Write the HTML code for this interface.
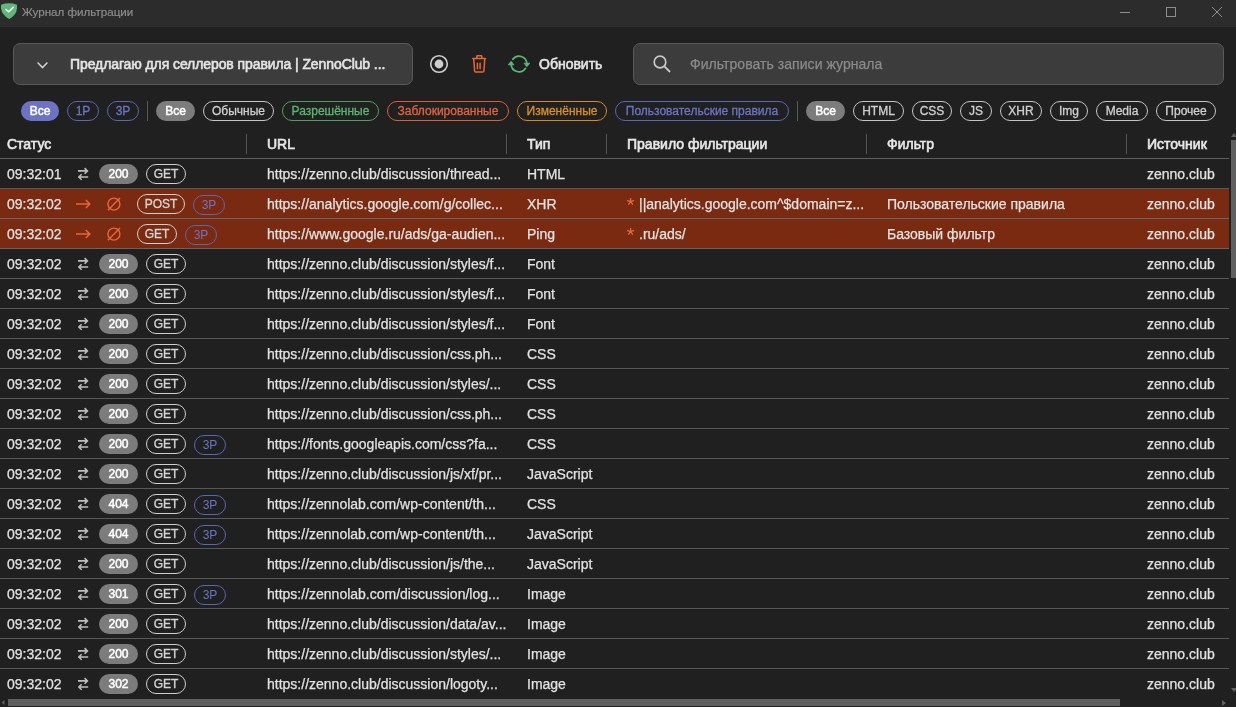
<!DOCTYPE html>
<html><head><meta charset="utf-8">
<style>
*{margin:0;padding:0;box-sizing:border-box}
html,body{width:1236px;height:707px;overflow:hidden;background:#202020;-webkit-font-smoothing:antialiased;font-family:"Liberation Sans",sans-serif;color:#e6e6e6;position:relative}
.abs{position:absolute}
#title{position:absolute;left:0;top:0;width:1236px;height:27px;background:#2c2c2c}
#title .t{position:absolute;left:22px;top:5px;font-size:11.6px;-webkit-text-stroke:0.2px #8c8c8c;color:#8c8c8c;line-height:14px}
.wbtn{position:absolute}
#dd{position:absolute;left:13px;top:43px;width:400px;height:42px;border:1px solid #595959;border-radius:7px;background:#3c3c3c}
#dd .t{position:absolute;left:56px;top:12px;font-size:14px;letter-spacing:-0.09px;-webkit-text-stroke:0.6px #e4e4e4;color:#e4e4e4;line-height:16px;white-space:nowrap}
#refresh-t{position:absolute;left:539px;top:56px;font-size:14px;-webkit-text-stroke:0.6px #e4e4e4;color:#e4e4e4;line-height:16px}
#search{position:absolute;left:633px;top:43px;width:591px;height:42px;border:1px solid #595959;border-radius:7px;background:#3c3c3c}
#search .t{position:absolute;left:56px;top:12px;font-size:14px;color:#8a8a8a;-webkit-text-stroke:0.25px #8a8a8a;letter-spacing:0.05px;line-height:16px;white-space:nowrap}
.chip{position:absolute;top:101px;height:20px;border-radius:10px;border:1px solid #c4c4c4;color:#cfcfcf;-webkit-text-stroke:0.3px currentColor;font-size:12px;line-height:18px;text-align:center;white-space:nowrap}
.chip.f{border:none;line-height:20px;-webkit-text-stroke:0.5px currentColor}
.sep{position:absolute;top:101px;width:1px;height:20px;background:#5a5a5a}
.hdr{position:absolute;top:136px;font-size:14px;-webkit-text-stroke:0.6px #e8e8e8;color:#e8e8e8;line-height:16px;white-space:nowrap}
.hsep{position:absolute;top:134px;width:1px;height:20px;background:#555}
#hline{position:absolute;left:0;top:158px;width:1229px;height:1px;background:#5f5f5f}
.row{position:absolute;left:0;width:1229px;height:30px;border-bottom:1px solid #585858}
.row.last{border-bottom:none}
.row.red{background:#7a2a10;border-bottom-color:#666}
.row span,.row svg{position:absolute}
.time{left:7px;top:7px;font-size:14px;line-height:16px;color:#e2e2e2;-webkit-text-stroke:0.25px #e2e2e2}
.txt{top:7px;font-size:14px;line-height:16px;color:#e2e2e2;white-space:nowrap;-webkit-text-stroke:0.25px #e2e2e2}
.swap{left:78px;top:8px}
.arr{left:75px;top:10px}
.blk{left:107px;top:7px}
.code{left:99px;top:5px;width:39px;height:20px;border-radius:10px;background:#7c7c7c;color:#fff;-webkit-text-stroke:0.5px #fff;font-size:12px;line-height:20px;text-align:center}
.meth{top:5px;width:40px;height:20px;border-radius:10px;border:1px solid #cfcfcf;color:#d4d4d4;-webkit-text-stroke:0.35px #d4d4d4;font-size:12px;line-height:18px;text-align:center}
.tp{top:6px;width:32px;height:20px;border-radius:10px;border:1px solid #5c64b4;color:#6c74c4;font-size:12px;line-height:18px;text-align:center}
.star{left:627px;top:9px}
#vthumb{position:absolute;left:1231px;top:140px;width:5px;height:138px;background:#606060}
#hthumb{position:absolute;left:8px;top:699px;width:1112px;height:7px;background:#606060}
</style></head><body><div id="root" style="position:absolute;left:0;top:0;width:1236px;height:707px;will-change:transform">
<div id="title">
 <svg class="abs" style="left:0px;top:0px" width="18" height="20" viewBox="0 0 18 20"><path d="M1 4.7Q9 1.9 17 4.7L17 8.2Q16.4 15.2 9.2 18.9Q2 15.2 1 8.2Z" fill="#64b57c"/><path d="M6.1 9.6L8.6 11.8L13.3 7.3" fill="none" stroke="#fff" stroke-width="1.5" stroke-linecap="round" stroke-linejoin="round"/></svg>
 <div class="t">Журнал фильтрации</div>
 <div class="abs" style="left:1120px;top:12px;width:10px;height:1px;background:#8e8e8e"></div>
 <div class="abs" style="left:1166px;top:7px;width:10px;height:10px;border:1px solid #8e8e8e"></div>
 <svg class="abs" style="left:1212px;top:7px" width="10" height="10" viewBox="0 0 10 10"><path d="M0 0L10 10M10 0L0 10" stroke="#8e8e8e" stroke-width="1"/></svg>
</div>

<div id="dd">
 <svg class="abs" style="left:23px;top:18px" width="11" height="7" viewBox="0 0 11 7"><path d="M0.6 0.6L5.5 5.6L10.4 0.6" fill="none" stroke="#d0d0d0" stroke-width="1.5"/></svg>
 <div class="t">Предлагаю для селлеров правила | ZennoClub ...</div>
</div>

<svg class="abs" style="left:429px;top:54px" width="20" height="20" viewBox="0 0 20 20"><circle cx="10" cy="10" r="8.3" fill="none" stroke="#cfcfcf" stroke-width="1.6"/><circle cx="10" cy="10" r="4.4" fill="#cfcfcf"/></svg>
<svg class="abs" style="left:471px;top:54px" width="16" height="20" viewBox="0 0 16 20"><path d="M1.8 4.5H14.5M5.8 4.5V2.4Q5.8 1.8 6.4 1.8H10.2Q10.8 1.8 10.8 2.4V4.5M2.7 4.5L3.6 17Q3.7 18 4.7 18H11.8Q12.8 18 12.9 17L13.8 4.5M6.4 9.2V14.8M9.1 9.2V14.8" fill="none" stroke="#e8663a" stroke-width="1.5" stroke-linecap="round" stroke-linejoin="round"/></svg>
<svg class="abs" style="left:507px;top:54px" width="24" height="20" viewBox="0 0 24 20"><path d="M5.8 5.3A7.8 7.8 0 0 1 19.8 9.6M18.5 14.3A7.8 7.8 0 0 1 4.2 10.4" fill="none" stroke="#5cb878" stroke-width="1.7" stroke-linecap="round"/><path d="M17 9.2H22.8L19.9 12.7Z M1.2 10.8H7L4.1 7.3Z" fill="#5cb878" stroke="#5cb878" stroke-width="0.8" stroke-linejoin="round"/></svg>
<div id="refresh-t">Обновить</div>

<div id="search">
 <svg class="abs" style="left:19px;top:11px" width="19" height="18" viewBox="0 0 19 18"><circle cx="7" cy="7" r="5.8" fill="none" stroke="#c8c8c8" stroke-width="1.7"/><path d="M11.2 11.2L17 17" stroke="#c8c8c8" stroke-width="1.8"/></svg>
 <div class="t">Фильтровать записи журнала</div>
</div>

<div class="chip f" style="left:21px;width:38px;background:#6b73c2;color:#fff">Все</div>
<div class="chip" style="left:67px;width:32px;border-color:#5c64b4;color:#6c74c4">1P</div>
<div class="chip" style="left:107px;width:32px;border-color:#5c64b4;color:#6c74c4">3P</div>
<div class="sep" style="left:147px"></div>
<div class="chip f" style="left:156px;width:39px;background:#7c7c7c;color:#fff">Все</div>
<div class="chip" style="left:203px;width:71px">Обычные</div>
<div class="chip" style="left:282px;width:97px;border-color:#4fa060;color:#5cb870">Разрешённые</div>
<div class="chip" style="left:387px;width:122px;border-color:#d9603c;color:#e0643e">Заблокированные</div>
<div class="chip" style="left:517px;width:90px;border-color:#d48a1c;color:#dc9020">Изменённые</div>
<div class="chip" style="left:615px;width:174px;border-color:#5c64b4;color:#6c74c4">Пользовательские правила</div>
<div class="sep" style="left:797px"></div>
<div class="chip f" style="left:806px;width:39px;background:#7c7c7c;color:#fff">Все</div>
<div class="chip" style="left:853px;width:51px">HTML</div>
<div class="chip" style="left:912px;width:40px">CSS</div>
<div class="chip" style="left:960px;width:32px">JS</div>
<div class="chip" style="left:1000px;width:42px">XHR</div>
<div class="chip" style="left:1050px;width:38px">Img</div>
<div class="chip" style="left:1096px;width:52px">Media</div>
<div class="chip" style="left:1156px;width:60px">Прочее</div>

<div class="hdr" style="left:7px">Статус</div>
<div class="hsep" style="left:246px"></div>
<div class="hdr" style="left:267px">URL</div>
<div class="hsep" style="left:506px"></div>
<div class="hdr" style="left:527px">Тип</div>
<div class="hsep" style="left:606px"></div>
<div class="hdr" style="left:627px">Правило фильтрации</div>
<div class="hsep" style="left:866px"></div>
<div class="hdr" style="left:887px">Фильтр</div>
<div class="hsep" style="left:1126px"></div>
<div class="hdr" style="left:1147px">Источник</div>
<div id="hline"></div>
<svg class="abs" style="left:1231px;top:133px" width="5" height="4" viewBox="0 0 5 4"><path d="M0 4L3 0L6 4Z" fill="#606060"/></svg>
<div id="vthumb"></div>

<div class="row" style="top:159px"><span class="time">09:32:01</span><svg class="swap" width="11" height="14" viewBox="0 0 11 14"><path d="M0 3.9H9.4M6.6 1.1L9.4 3.9L6.6 6.7M10.2 10H0.8M3.6 7.2L0.8 10L3.6 12.8" fill="none" stroke="#bdbdbd" stroke-width="1.6"/></svg><span class="code">200</span><span class="meth" style="left:146px">GET</span><span class="txt" style="left:267px">https://zenno.club/discussion/thread...</span><span class="txt" style="left:527px">HTML</span><span class="txt" style="left:1147px">zenno.club</span></div>
<div class="row red" style="top:189px"><span class="time">09:32:02</span><svg class="arr" width="16" height="10" viewBox="0 0 16 10"><path d="M1 5H14.8M10.8 1L14.8 5L10.8 9" fill="none" stroke="#e8663a" stroke-width="1.5"/></svg><svg class="blk" width="15" height="16" viewBox="0 0 15 16"><circle cx="6.9" cy="8.1" r="6" fill="none" stroke="#e8663a" stroke-width="1.4"/><path d="M0.9 14.2L13 2" stroke="#e8663a" stroke-width="1.4"/></svg><span class="meth" style="left:137px;width:48px">POST</span><span class="tp" style="left:193px">3P</span><span class="txt" style="left:267px">https://analytics.google.com/g/collec...</span><span class="txt" style="left:527px">XHR</span><svg class="star" width="8" height="8" viewBox="0 0 8 8"><path d="M3.6 3.6V0.4M3.6 3.6L6.64 2.61M3.6 3.6L5.48 6.19M3.6 3.6L1.72 6.19M3.6 3.6L0.56 2.61" stroke="#e8663a" stroke-width="1.3" stroke-linecap="round"/></svg><span class="txt" style="left:639px">||analytics.google.com^$domain=z...</span><span class="txt" style="left:887px">Пользовательские правила</span><span class="txt" style="left:1147px">zenno.club</span></div>
<div class="row red" style="top:219px"><span class="time">09:32:02</span><svg class="arr" width="16" height="10" viewBox="0 0 16 10"><path d="M1 5H14.8M10.8 1L14.8 5L10.8 9" fill="none" stroke="#e8663a" stroke-width="1.5"/></svg><svg class="blk" width="15" height="16" viewBox="0 0 15 16"><circle cx="6.9" cy="8.1" r="6" fill="none" stroke="#e8663a" stroke-width="1.4"/><path d="M0.9 14.2L13 2" stroke="#e8663a" stroke-width="1.4"/></svg><span class="meth" style="left:137px;width:40px">GET</span><span class="tp" style="left:185px">3P</span><span class="txt" style="left:267px">https://www.google.ru/ads/ga-audien...</span><span class="txt" style="left:527px">Ping</span><svg class="star" width="8" height="8" viewBox="0 0 8 8"><path d="M3.6 3.6V0.4M3.6 3.6L6.64 2.61M3.6 3.6L5.48 6.19M3.6 3.6L1.72 6.19M3.6 3.6L0.56 2.61" stroke="#e8663a" stroke-width="1.3" stroke-linecap="round"/></svg><span class="txt" style="left:639px">.ru/ads/</span><span class="txt" style="left:887px">Базовый фильтр</span><span class="txt" style="left:1147px">zenno.club</span></div>
<div class="row" style="top:249px"><span class="time">09:32:02</span><svg class="swap" width="11" height="14" viewBox="0 0 11 14"><path d="M0 3.9H9.4M6.6 1.1L9.4 3.9L6.6 6.7M10.2 10H0.8M3.6 7.2L0.8 10L3.6 12.8" fill="none" stroke="#bdbdbd" stroke-width="1.6"/></svg><span class="code">200</span><span class="meth" style="left:146px">GET</span><span class="txt" style="left:267px">https://zenno.club/discussion/styles/f...</span><span class="txt" style="left:527px">Font</span><span class="txt" style="left:1147px">zenno.club</span></div>
<div class="row" style="top:279px"><span class="time">09:32:02</span><svg class="swap" width="11" height="14" viewBox="0 0 11 14"><path d="M0 3.9H9.4M6.6 1.1L9.4 3.9L6.6 6.7M10.2 10H0.8M3.6 7.2L0.8 10L3.6 12.8" fill="none" stroke="#bdbdbd" stroke-width="1.6"/></svg><span class="code">200</span><span class="meth" style="left:146px">GET</span><span class="txt" style="left:267px">https://zenno.club/discussion/styles/f...</span><span class="txt" style="left:527px">Font</span><span class="txt" style="left:1147px">zenno.club</span></div>
<div class="row" style="top:309px"><span class="time">09:32:02</span><svg class="swap" width="11" height="14" viewBox="0 0 11 14"><path d="M0 3.9H9.4M6.6 1.1L9.4 3.9L6.6 6.7M10.2 10H0.8M3.6 7.2L0.8 10L3.6 12.8" fill="none" stroke="#bdbdbd" stroke-width="1.6"/></svg><span class="code">200</span><span class="meth" style="left:146px">GET</span><span class="txt" style="left:267px">https://zenno.club/discussion/styles/f...</span><span class="txt" style="left:527px">Font</span><span class="txt" style="left:1147px">zenno.club</span></div>
<div class="row" style="top:339px"><span class="time">09:32:02</span><svg class="swap" width="11" height="14" viewBox="0 0 11 14"><path d="M0 3.9H9.4M6.6 1.1L9.4 3.9L6.6 6.7M10.2 10H0.8M3.6 7.2L0.8 10L3.6 12.8" fill="none" stroke="#bdbdbd" stroke-width="1.6"/></svg><span class="code">200</span><span class="meth" style="left:146px">GET</span><span class="txt" style="left:267px">https://zenno.club/discussion/css.ph...</span><span class="txt" style="left:527px">CSS</span><span class="txt" style="left:1147px">zenno.club</span></div>
<div class="row" style="top:369px"><span class="time">09:32:02</span><svg class="swap" width="11" height="14" viewBox="0 0 11 14"><path d="M0 3.9H9.4M6.6 1.1L9.4 3.9L6.6 6.7M10.2 10H0.8M3.6 7.2L0.8 10L3.6 12.8" fill="none" stroke="#bdbdbd" stroke-width="1.6"/></svg><span class="code">200</span><span class="meth" style="left:146px">GET</span><span class="txt" style="left:267px">https://zenno.club/discussion/styles/...</span><span class="txt" style="left:527px">CSS</span><span class="txt" style="left:1147px">zenno.club</span></div>
<div class="row" style="top:399px"><span class="time">09:32:02</span><svg class="swap" width="11" height="14" viewBox="0 0 11 14"><path d="M0 3.9H9.4M6.6 1.1L9.4 3.9L6.6 6.7M10.2 10H0.8M3.6 7.2L0.8 10L3.6 12.8" fill="none" stroke="#bdbdbd" stroke-width="1.6"/></svg><span class="code">200</span><span class="meth" style="left:146px">GET</span><span class="txt" style="left:267px">https://zenno.club/discussion/css.ph...</span><span class="txt" style="left:527px">CSS</span><span class="txt" style="left:1147px">zenno.club</span></div>
<div class="row" style="top:429px"><span class="time">09:32:02</span><svg class="swap" width="11" height="14" viewBox="0 0 11 14"><path d="M0 3.9H9.4M6.6 1.1L9.4 3.9L6.6 6.7M10.2 10H0.8M3.6 7.2L0.8 10L3.6 12.8" fill="none" stroke="#bdbdbd" stroke-width="1.6"/></svg><span class="code">200</span><span class="meth" style="left:146px">GET</span><span class="tp" style="left:194px">3P</span><span class="txt" style="left:267px">https://fonts.googleapis.com/css?fa...</span><span class="txt" style="left:527px">CSS</span><span class="txt" style="left:1147px">zenno.club</span></div>
<div class="row" style="top:459px"><span class="time">09:32:02</span><svg class="swap" width="11" height="14" viewBox="0 0 11 14"><path d="M0 3.9H9.4M6.6 1.1L9.4 3.9L6.6 6.7M10.2 10H0.8M3.6 7.2L0.8 10L3.6 12.8" fill="none" stroke="#bdbdbd" stroke-width="1.6"/></svg><span class="code">200</span><span class="meth" style="left:146px">GET</span><span class="txt" style="left:267px">https://zenno.club/discussion/js/xf/pr...</span><span class="txt" style="left:527px">JavaScript</span><span class="txt" style="left:1147px">zenno.club</span></div>
<div class="row" style="top:489px"><span class="time">09:32:02</span><svg class="swap" width="11" height="14" viewBox="0 0 11 14"><path d="M0 3.9H9.4M6.6 1.1L9.4 3.9L6.6 6.7M10.2 10H0.8M3.6 7.2L0.8 10L3.6 12.8" fill="none" stroke="#bdbdbd" stroke-width="1.6"/></svg><span class="code">404</span><span class="meth" style="left:146px">GET</span><span class="tp" style="left:194px">3P</span><span class="txt" style="left:267px">https://zennolab.com/wp-content/th...</span><span class="txt" style="left:527px">CSS</span><span class="txt" style="left:1147px">zenno.club</span></div>
<div class="row" style="top:519px"><span class="time">09:32:02</span><svg class="swap" width="11" height="14" viewBox="0 0 11 14"><path d="M0 3.9H9.4M6.6 1.1L9.4 3.9L6.6 6.7M10.2 10H0.8M3.6 7.2L0.8 10L3.6 12.8" fill="none" stroke="#bdbdbd" stroke-width="1.6"/></svg><span class="code">404</span><span class="meth" style="left:146px">GET</span><span class="tp" style="left:194px">3P</span><span class="txt" style="left:267px">https://zennolab.com/wp-content/th...</span><span class="txt" style="left:527px">JavaScript</span><span class="txt" style="left:1147px">zenno.club</span></div>
<div class="row" style="top:549px"><span class="time">09:32:02</span><svg class="swap" width="11" height="14" viewBox="0 0 11 14"><path d="M0 3.9H9.4M6.6 1.1L9.4 3.9L6.6 6.7M10.2 10H0.8M3.6 7.2L0.8 10L3.6 12.8" fill="none" stroke="#bdbdbd" stroke-width="1.6"/></svg><span class="code">200</span><span class="meth" style="left:146px">GET</span><span class="txt" style="left:267px">https://zenno.club/discussion/js/the...</span><span class="txt" style="left:527px">JavaScript</span><span class="txt" style="left:1147px">zenno.club</span></div>
<div class="row" style="top:579px"><span class="time">09:32:02</span><svg class="swap" width="11" height="14" viewBox="0 0 11 14"><path d="M0 3.9H9.4M6.6 1.1L9.4 3.9L6.6 6.7M10.2 10H0.8M3.6 7.2L0.8 10L3.6 12.8" fill="none" stroke="#bdbdbd" stroke-width="1.6"/></svg><span class="code">301</span><span class="meth" style="left:146px">GET</span><span class="tp" style="left:194px">3P</span><span class="txt" style="left:267px">https://zennolab.com/discussion/log...</span><span class="txt" style="left:527px">Image</span><span class="txt" style="left:1147px">zenno.club</span></div>
<div class="row" style="top:609px"><span class="time">09:32:02</span><svg class="swap" width="11" height="14" viewBox="0 0 11 14"><path d="M0 3.9H9.4M6.6 1.1L9.4 3.9L6.6 6.7M10.2 10H0.8M3.6 7.2L0.8 10L3.6 12.8" fill="none" stroke="#bdbdbd" stroke-width="1.6"/></svg><span class="code">200</span><span class="meth" style="left:146px">GET</span><span class="txt" style="left:267px">https://zenno.club/discussion/data/av...</span><span class="txt" style="left:527px">Image</span><span class="txt" style="left:1147px">zenno.club</span></div>
<div class="row" style="top:639px"><span class="time">09:32:02</span><svg class="swap" width="11" height="14" viewBox="0 0 11 14"><path d="M0 3.9H9.4M6.6 1.1L9.4 3.9L6.6 6.7M10.2 10H0.8M3.6 7.2L0.8 10L3.6 12.8" fill="none" stroke="#bdbdbd" stroke-width="1.6"/></svg><span class="code">200</span><span class="meth" style="left:146px">GET</span><span class="txt" style="left:267px">https://zenno.club/discussion/styles/...</span><span class="txt" style="left:527px">Image</span><span class="txt" style="left:1147px">zenno.club</span></div>
<div class="row last" style="top:669px"><span class="time">09:32:02</span><svg class="swap" width="11" height="14" viewBox="0 0 11 14"><path d="M0 3.9H9.4M6.6 1.1L9.4 3.9L6.6 6.7M10.2 10H0.8M3.6 7.2L0.8 10L3.6 12.8" fill="none" stroke="#bdbdbd" stroke-width="1.6"/></svg><span class="code">302</span><span class="meth" style="left:146px">GET</span><span class="txt" style="left:267px">https://zenno.club/discussion/logoty...</span><span class="txt" style="left:527px">Image</span><span class="txt" style="left:1147px">zenno.club</span></div>

<svg class="abs" style="left:1231px;top:688px" width="5" height="4" viewBox="0 0 5 4"><path d="M0 0L3 4L6 0Z" fill="#606060"/></svg>
<svg class="abs" style="left:1px;top:700px" width="4" height="5" viewBox="0 0 4 5"><path d="M3.5 0L0.5 2.5L3.5 5Z" fill="#606060"/></svg>
<div id="hthumb"></div>
<svg class="abs" style="left:1222px;top:700px" width="4" height="6" viewBox="0 0 4 6"><path d="M0 0L4 3L0 6Z" fill="#606060"/></svg>
</div></body></html>
